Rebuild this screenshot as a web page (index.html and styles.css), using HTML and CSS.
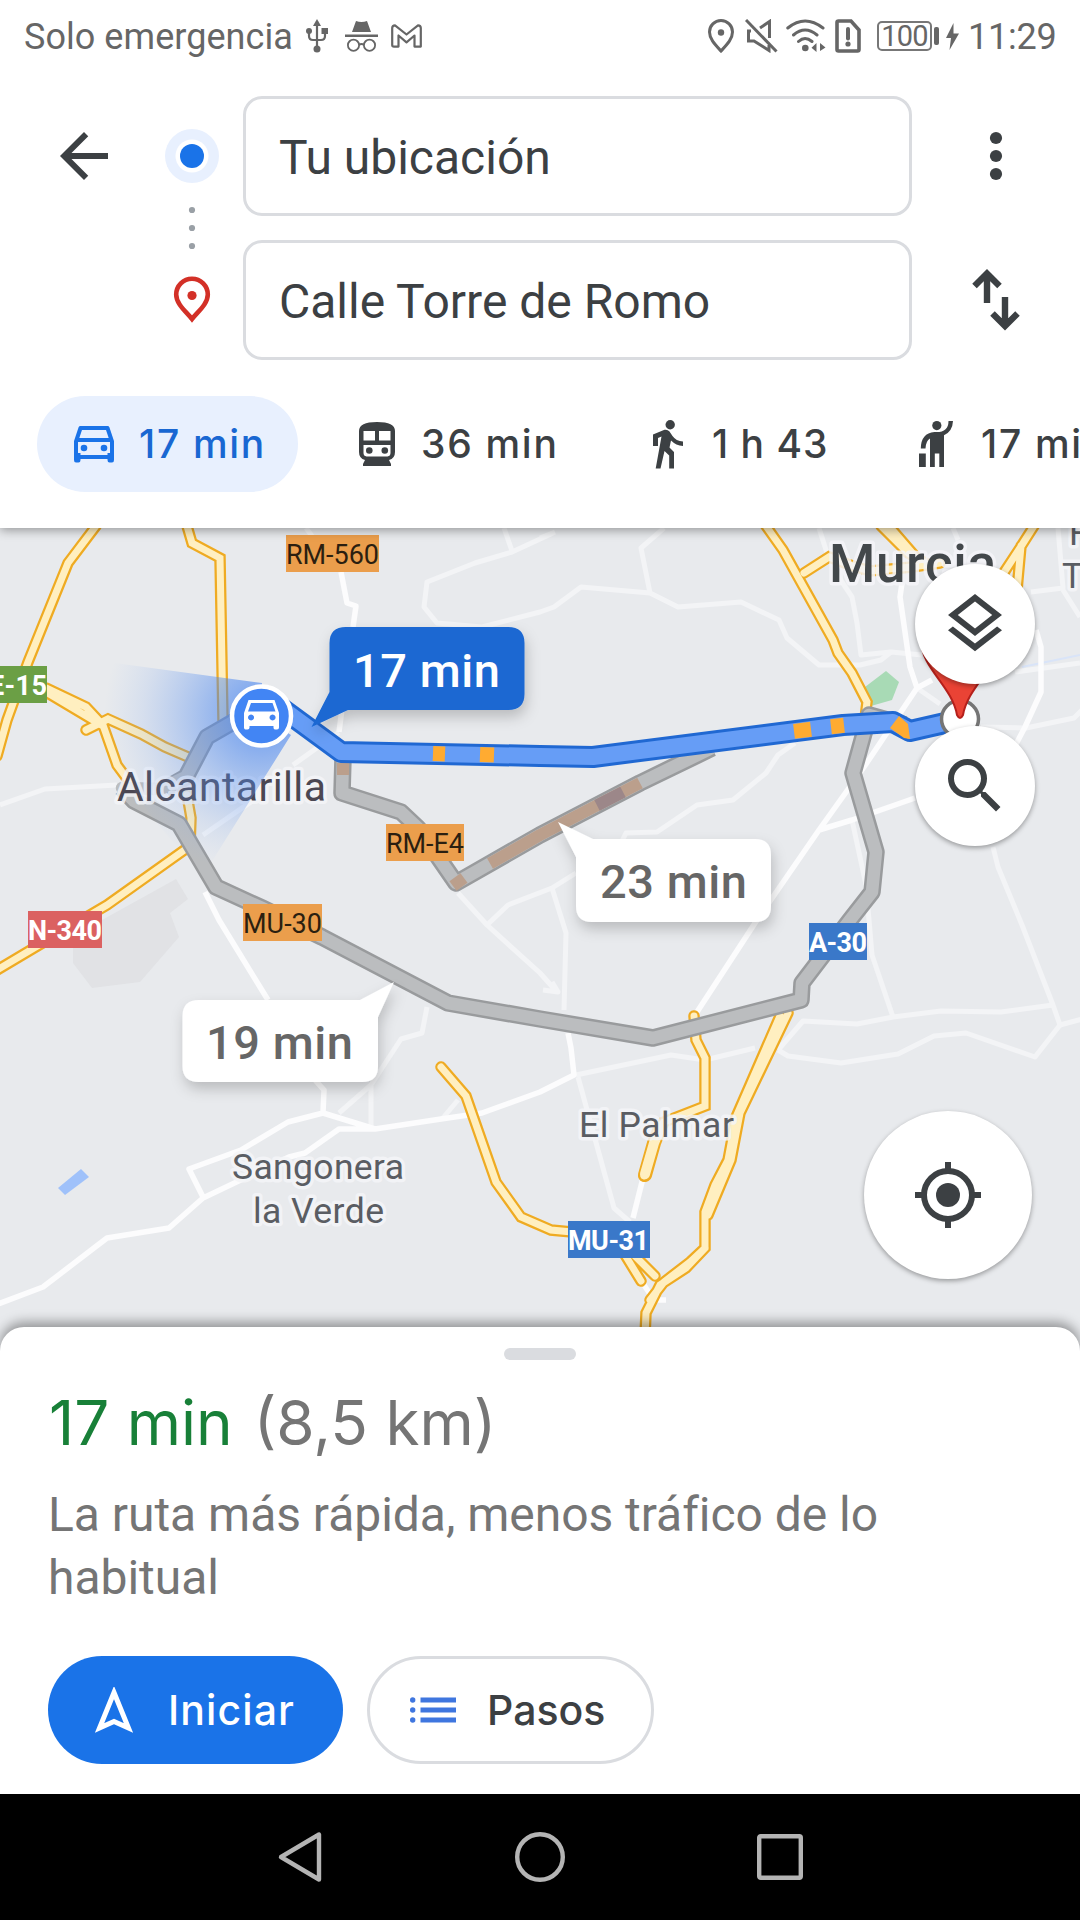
FILE: index.html
```html
<!DOCTYPE html>
<html lang="es">
<head>
<meta charset="utf-8">
<title>Tu ubicación – Calle Torre de Romo</title>
<link rel="stylesheet" href="styles.css">
</head>
<body>
<div class="screen">
  <header class="top">
    <div class="status">
      <span class="carrier">Solo emergencia</span>
      <svg class="st-usb" width="22" height="34" viewBox="0 0 22 34"><path d="M11 2v28M3 10v7q0 4 4 4h8q4 0 4-4v-6" fill="none" stroke="#666" stroke-width="2.2"/><path d="M11 0l4 7H7z" fill="#666"/><circle cx="11" cy="30" r="3.5" fill="#666"/><circle cx="3" cy="12" r="3" fill="#666"/><path d="M15.500 9H22v6h-6.500z" fill="#666"/></svg>
      <svg class="st-incog" width="33" height="31" viewBox="0 0 33 31"><path d="M7 11L11 0q5.500 2 11 0l4 11zM0 13.500h33v2.500H0z" fill="#666"/><g fill="none" stroke="#666" stroke-width="1.800"><circle cx="8.500" cy="24.200" r="5.600"/><circle cx="24.500" cy="24.200" r="5.600"/><path d="M14 24q2.500-2 5 0"/></g></svg>
      <svg class="st-mail" width="31" height="24" viewBox="0 0 31 24"><path d="M1.200 21V4Q1.200 1.300 4 1.300L15.500 10.500 27 1.300q2.800 0 2.800 2.700V22.600H23.500V11.500L15.500 18.300 7.500 11.500V22.600H3Q1.200 22.600 1.200 21z" fill="none" stroke="#666" stroke-width="2.200" stroke-linejoin="round"/></svg>
      <span class="spacer"></span>
      <svg class="st-pin" width="26" height="34" viewBox="0 0 26 34"><path d="M13 32C7 25.500 1.500 20 1.500 13a11.500 11.500 0 0 1 23 0C24.500 20 19 25.500 13 32z" fill="none" stroke="#666" stroke-width="3"/><circle cx="13" cy="13.500" r="3.200" fill="#666"/></svg>
      <svg class="st-mute" width="33" height="34" viewBox="0 0 33 34"><path d="M1 1l30.500 31.500" stroke="#666" stroke-width="3" fill="none"/><path d="M6 12H3.500v10H9l15 9.500V26M15 9l9.500-6.500V19" stroke="#666" stroke-width="3" fill="none"/></svg>
      <svg class="st-wifi" width="40" height="34" viewBox="0 0 40 34"><g fill="none" stroke="#666" stroke-width="3" stroke-linecap="round"><path d="M1.800 9Q19 -5 37 9M7.500 16Q19 6 31 16M12.500 22.500Q19 16.500 26 22.500"/></g><circle cx="19.300" cy="29" r="3.300" fill="#666"/><path d="M30.500 24v9l-5-4.300zM34 24l5.500 4.500L34 32z" fill="#666"/></svg>
      <svg class="st-sim" width="26" height="34" viewBox="0 0 26 34"><path d="M3.500 2H16l8 9v19.500q0 1.500-1.500 1.500h-19Q2 32 2 30.500v-27Q2 2 3.500 2z" fill="none" stroke="#666" stroke-width="3.600"/><path d="M13 10v9.500" stroke="#666" stroke-width="4" stroke-linecap="round"/><circle cx="13" cy="25" r="2.600" fill="#666"/></svg>
      <span class="battery">100</span><span class="nub"></span>
      <svg class="st-bolt" width="13" height="27" viewBox="0 0 13 27"><path d="M7.500 0L0 15h5l-1.500 12L13 10.500H7.500z" fill="#666"/></svg>
      <span class="clock">11:29</span>
    </div>
    <div class="route-form">
      <svg class="back" width="72" height="72" viewBox="0 0 24 24"><path d="M20 11H7.830l5.590-5.590L12 4l-8 8 8 8 1.410-1.410L7.830 13H20z" fill="#3c4043"/></svg>
      <svg class="markers" width="60" height="264" viewBox="0 0 60 264"><circle cx="30" cy="60" r="27" fill="#e8f0fe"/><circle cx="30" cy="60" r="16.500" fill="#fff"/><circle cx="30" cy="60" r="12" fill="#1a73e8"/><g fill="#9aa0a6"><circle cx="30" cy="114" r="3.100"/><circle cx="30" cy="132" r="3.100"/><circle cx="30" cy="150" r="3.100"/></g><path d="M30 223C24 215.500 14.200 208 14.200 198.500a15.800 15.800 0 0 1 31.600 0C45.800 208 36 215.500 30 223z" fill="none" stroke="#d33027" stroke-width="4.600"/><circle cx="30" cy="199.500" r="4.600" fill="#d33027"/></svg>
      <div class="fields">
        <div class="field">Tu ubicación</div>
        <div class="field">Calle Torre de Romo</div>
      </div>
      <svg class="actions" width="60" height="264" viewBox="0 0 60 264"><g fill="#3c4043"><circle cx="30" cy="42" r="6.100"/><circle cx="30" cy="60" r="6.100"/><circle cx="30" cy="78" r="6.100"/></g><path d="M21 207v-29M8.500 190L21 177.500 33.500 190M39 201v29M26.500 217.500L39 230l12.500-12.500" fill="none" stroke="#3c4043" stroke-width="6.400"/></svg>
    </div>
    <nav class="modes">
      <div class="mode mode-car"><svg width="40" height="37" viewBox="0 0 40 37"><path d="M6.500 2h27l4.500 13.500V31H2V15.500zM3 14h34" fill="none" stroke="#1a73e8" stroke-width="4" stroke-linejoin="round"/><path d="M0 27h6.500v7q0 2.500-2 2.500H2q-2 0-2-2.500zM33.500 27H40v7q0 2.500-2 2.500h-2.500q-2 0-2-2.500z" fill="#1a73e8"/><circle cx="10" cy="22" r="3.300" fill="#1a73e8"/><circle cx="30" cy="22" r="3.300" fill="#1a73e8"/></svg><span>17 min</span></div>
      <div class="mode mode-transit"><svg width="36" height="44" viewBox="0 0 36 44"><path fill-rule="evenodd" fill="#3c4043" d="M0 9Q0 0 18 0T36 9V30Q36 36.500 30 38L32 42v2H4v-2l2-4Q0 36.500 0 30zM4.500 9v9.500H16V9zM20 9v9.500H31.500V9zM4.500 23v8q0 3 3 3.500h21q3-.5 3-3.500v-8z"/><circle cx="10.300" cy="28.500" r="3.300" fill="#3c4043"/><circle cx="25.800" cy="28.500" r="3.300" fill="#3c4043"/></svg><span>36 min</span></div>
      <div class="mode mode-walk"><svg width="30" height="49" viewBox="0 0 30 49"><circle cx="17.200" cy="4.700" r="4.700" fill="#3c4043"/><path fill="#3c4043" d="M0 14.500L11.500 9.800q3-.6 5 1.700L19.500 16q3.500 5 10.500 5.500V26q-7-.5-12-5.500L16.500 27.500 21 32V48.500H16.200V35.500L11.500 31 7.500 48.500H2.700L8.500 16.500 5 18V26H0z"/></svg><span>1 h 43</span></div>
      <div class="mode mode-hail"><svg width="34" height="46" viewBox="0 0 34 46"><circle cx="17.800" cy="4.600" r="4.600" fill="#3c4043"/><path fill="#3c4043" d="M29.500 0H34Q33.500 10.500 25 14.200V46h-4.700V32.500h-4.500V46H11V17.500Q6.800 20 6.500 27.500H1.800Q2 12 15.500 11 29.500 12 29.500 0zM0 32.500h6.800V46H0z"/></svg><span>17 min</span></div>
    </nav>
  </header>

  <main class="map">
    <svg class="canvas" width="1080" height="832" viewBox="0 528 1080 832">
      <defs>
        <radialGradient id="beam" gradientUnits="userSpaceOnUse" cx="262" cy="716" r="158"><stop offset="0" stop-color="#3b7df0" stop-opacity=".75"/><stop offset=".35" stop-color="#4a86ee" stop-opacity=".46"/><stop offset=".75" stop-color="#6d9df0" stop-opacity=".15"/><stop offset="1" stop-color="#8ab4f8" stop-opacity="0"/></radialGradient>
        <filter id="soft" x="-20%" y="-30%" width="140%" height="180%"><feDropShadow dx="2" dy="7" stdDeviation="7" flood-color="#000" flood-opacity=".2"/></filter>
        <g id="yellow">
          <path d="M96 526L68 563 28 662 7 720-3 756"/>
          <path d="M187 526L192 543 220 558 223 720"/>
          <path d="M46 688L86 707 103 725 117 765 131 784M46 692L103 726"/>
          <path d="M86 730L108 719 141 734 165 747 188 757"/>
          <path d="M187 795L191 818 190 846 107 905 34 948-3 970"/>
          <path d="M766 526L783 550 833 640 838 653 852 673 867 702 865 718"/>
          <path d="M804 573L829 557 850 565 870 571 912 567 940 563"/>
          <path d="M881 526L908 553 930 566M889 526L915 556"/>
          <path d="M1034 526L1020 548 1001 577M1021 546L1017 590"/>
          <path d="M441 1067L466 1096 496 1182 521 1217 551 1230 572 1232"/>
          <path d="M694 1016L696 1040 705 1058 705 1106 664 1122 654 1143 644 1176"/>
          <path d="M780 1016L736 1117 728 1160 715 1185 705 1212 705 1248 686 1268 660 1285 646 1313 644 1360M788 1013L740 1113 731 1160 708 1215M705 1248L690 1262 664 1282 650 1300"/>
          <path d="M622 1250L641 1281M633 1254L655 1276"/>
        </g>
      </defs>
      <path d="M0 528H1080V1360H0z" fill="#e8eaed"/>
      <path d="M176 879L188 899 170 913 179 937 140 982 92 988 73 963 73 935 102 920z" fill="#e1e2e5"/>
      <path d="M58 1188L81 1169 89 1177 65 1195z" fill="#9fc1fa"/>
      <path d="M865 687L886 671 899 682 892 700 871 706z" fill="#a8dab5"/>
      <path d="M1022 667L1080 655" stroke="#d9e4f8" stroke-width="2"/>

      <g class="minor">
        <path d="M306 528L312 536M504 528L512 551M553 533L512 552 475 563 427 582 424 607 437 623 482 627 540 612 554 607 581 587 650 593 678 607 741 602 779 620 787 638 819 665 860 665 881 660 891 652M650 593L641 548 664 528M540 538L555 532"/>
        <path d="M922 655L891 652 861 655 857 623 852 597 836 573 826 550 819 528"/>
        <path d="M981 727L1026 728 1050 723 1074 718 1082 710M1015 672L1080 663M1031 592L1063 588 1058 528M1063 590L1080 617M953 528L958 540"/>
        <path d="M993 847L998 867 1022 925 1053 1005 1060 1025 1082 1019"/>
        <path d="M795 743L778 755 766 773 733 800 697 805 657 832 626 833 620 845"/>
        <path d="M576 873L552 888 508 905 487 925 458 893M487 925L540 973 557 992M552 888L566 933 564 1010M543 990L558 992 552 982"/>
        <path d="M852 820L866 885 872 955 893 1017M917 688L940 704"/>
        <path d="M576 1075L671 1055 705 1060 755 1048M778 1050L788 1056 841 1063 898 1054 934 1036 966 1033 1035 1057 1060 1025M778 1050L803 1021 857 1024 893 1017 941 1011 1001 1012 1053 1005"/>
        <path d="M578 1077L614 1208 630 1222M0 805L45 789 117 785M258 797L203 835M339 732L293 765"/>
        <path d="M339 1113L371 1085 384 1065 401 1039 422 1033 427 1007M371 1085V1127M442 1119L458 1100"/>
      </g>
      <g class="major">
        <path d="M341 572L347 603 356 606 353 627M342 709L339 732"/>
        <path d="M902 583L900 597 910 667 917 688 932 680M917 688L864 767 819 830 757 920 697 1012M819 830L852 820 915 798M1036 630L1041 647 1041 692 1025 727 1005 765"/>
        <path d="M568 1033L571 1048 574 1075 540 1092 482 1113 441 1119 375 1129 339 1129 305 1153 289 1157 203 1198 169 1228 107 1238 43 1287-2 1304M203 1197L189 1169 241 1150 288 1122 323 1113 375 1129M323 1113L324 1090 315 1080M205 892L219 920 268 1000"/>
        <path d="M643 1178L633 1218M642 1282L654 1300 666 1300"/>
      </g>

      <g class="road-case"><use href="#yellow"/><path d="M660 1128L654 1143 645 1175" stroke-width="14"/></g>
      <g class="road-fill"><use href="#yellow"/><path d="M661 1126L654 1143 645 1174" stroke-width="10"/></g>

      <g class="route alt">
        <path class="case" d="M343 758L342 793 401 812 418 828 456 883 540 835 640 783 712 748"/>
        <path class="fill" d="M343 758L342 793 401 812 418 828 456 883 540 835 640 783 712 748"/>
        <path d="M343 763V775M453 886L464 878M490 863.500L540 835 640 783" stroke="#bb9f8c" stroke-width="12"/>
        <path d="M597 805.300L623 792" stroke="#9c8789" stroke-width="12"/>
        <path class="case" d="M240 718L207 737 186 777 165 789M122 788L134 801 179 824 216 887 262 908 322 937 448 1003 540 1019 653 1038 801 1000 802 983 850 920 872 892 876 852 853 773 869 715 905 725"/>
        <path class="fill" d="M240 718L207 737 186 777 160 789 122 788 134 801 179 824 216 887 262 908 322 937 448 1003 540 1019 653 1038 801 1000 802 983 850 920 872 892 876 852 853 773 869 715 905 725"/>
      </g>
      <g class="route best">
        <path class="case" d="M262 694L341 752 540 756 593 757 843 725 893 722 910 731 945 723"/>
        <path class="fill" d="M262 694L341 752 540 756 593 757 843 725 893 722 910 731 945 723"/>
        <path d="M433 753.500L445 754M480 754.500L494 755M794 731.400L811 729.300M831 726.700L844 725.200" stroke="#ffab31" stroke-width="15"/>
        <path d="M890 728L899 716 908 724 910 739 904 738z" fill="#ffab31"/>
      </g>

      <circle cx="960" cy="719" r="18.500" fill="#fff" stroke="#757575" stroke-width="3.500"/>
      <path d="M957 715C952 686 921 668 921 640a39 39 0 0 1 78 0C999 668 968 686 963 715Q960 721 957 715z" fill="#ea4335" stroke="#b5201b" stroke-width="2"/>

      <g class="place">
        <text x="117" y="801" font-size="41" textLength="209" fill="#4b4752">Alcantarilla</text>
        <text x="829" y="582" font-size="53" textLength="167" font-weight="500" fill="#43484b">Murcia</text>
        <text x="579" y="1137" font-size="35.500" textLength="155">El Palmar</text>
        <text x="232" y="1179" font-size="35.500" textLength="172">Sangonera</text>
        <text x="253" y="1223" font-size="35.500" textLength="131">la Verde</text>
        <text x="1069" y="545" font-size="35">F</text>
        <text x="1062" y="588" font-size="35">T</text>
      </g>

      <g class="shield">
        <path d="M286 535h93v37h-93zM386 824h78v37h-78zM243 904h79v37h-79z" fill="#eb9e4c"/>
        <path d="M0 666h47v37H0z" fill="#6b9f45"/><path d="M28 911h74v37H28z" fill="#db6161"/>
        <path d="M809 923h58v37h-58zM568 1221h82v37h-82z" fill="#3a78c9"/>
        <text x="286" y="564" textLength="93">RM-560</text>
        <text x="386" y="853" textLength="78">RM-E4</text>
        <text x="243" y="933" textLength="79">MU-30</text>
        <g fill="#fff" font-weight="700"><text x="-11" y="695" textLength="58">E-15</text><text x="28" y="940" textLength="74">N-340</text><text x="809" y="952" textLength="58">A-30</text><text x="568" y="1250" textLength="81">MU-31</text></g>
      </g>

      <path d="M262 683L100 661Q85 760 204 874L291 735 262 716z" fill="url(#beam)"/>
      <g filter="url(#soft)">
        <path d="M346 627H508Q524.500 627 524.500 643V694Q524.500 710 508 710H348L311.500 727 329.500 692V643Q329.500 627 346 627z" fill="#1a67d2"/>
        <path d="M593 839H755Q771 839 771 855V906Q771 922 755 922H592Q576 922 576 906V857L558 822z" fill="#fff"/>
        <path d="M199 1000H360L394 982 378 1017V1066Q378 1082 362 1082H199Q182.500 1082 182.500 1066V1016Q182.500 1000 199 1000z" fill="#fff"/>
      </g>
      <g class="eta">
        <text x="353" y="687" textLength="147" fill="#fff">17 min</text>
        <text x="600" y="898" textLength="147">23 min</text>
        <text x="206" y="1059" textLength="147">19 min</text>
      </g>
      <circle cx="261.500" cy="716" r="29.500" fill="#4285f4" stroke="#fff" stroke-width="4.500"/>
      <path fill="#fff" fill-rule="evenodd" d="M248.500 700h26l4.500 13v14.500q0 2-2 2h-2q-1.500 0-1.500-2V726h-24v1.500q0 2-2 2h-2q-1.500 0-1.500-2V713zM251 703l-3 8.500h27.500l-3-8.500zM251 714.500a3 3 0 1 0 .1 0zM272.500 714.500a3 3 0 1 0 .1 0z"/>
    </svg>
    <button class="fab fab-layers" aria-label="Capas"><svg width="72" height="72" viewBox="0 0 24 24"><path fill="#3c4043" d="M11.990 18.540l-7.370-5.730L3 14.070l9 7 9-7-1.630-1.270zM12 16l7.360-5.730L21 9l-9-7-9 7 1.630 1.270zm0-11.470L17.740 9 12 13.470 6.260 9z"/></svg></button>
    <button class="fab fab-search" aria-label="Buscar"><svg width="72" height="72" viewBox="0 0 24 24"><path fill="#3c4043" d="M15.500 14h-.79l-.28-.27A6.471 6.471 0 0 0 16 9.500 6.500 6.500 0 1 0 9.500 16c1.610 0 3.090-.59 4.230-1.570l.27.28v.79l5 4.990L20.490 19l-4.990-5zm-6 0C7.010 14 5 11.990 5 9.500S7.010 5 9.500 5 14 7.010 14 9.500 11.990 14 9.500 14z"/></svg></button>
    <button class="fab fab-locate" aria-label="Mi ubicación"><svg width="66" height="66" viewBox="0 0 66 66"><circle cx="33" cy="33" r="24" fill="none" stroke="#3c4043" stroke-width="6"/><circle cx="33" cy="33" r="12" fill="#3c4043"/><path d="M33 0v9M33 57v9M0 33h9M57 33h9" stroke="#3c4043" stroke-width="6"/></svg></button>
  </main>

  <section class="sheet">
    <div class="handle"></div>
    <h1 class="summary"><span class="time">17 min</span><span class="dist">(8,5 km)</span></h1>
    <p class="note">La ruta más rápida, menos tráfico de lo habitual</p>
    <div class="buttons">
      <button class="btn start"><svg width="38" height="47" viewBox="0 0 38 47"><path d="M19 5.500L33.500 41 19 34.500 4.500 41z" fill="none" stroke="#fff" stroke-width="5"/></svg><span>Iniciar</span></button>
      <button class="btn steps"><svg width="46" height="26" viewBox="0 0 46 26"><path d="M10.500 3H46M10.500 13H46M10.500 23H46" stroke="#3f76df" stroke-width="5"/><g fill="#3f76df"><circle cx="2.700" cy="3" r="2.700"/><circle cx="2.700" cy="13" r="2.700"/><circle cx="2.700" cy="23" r="2.700"/></g></svg><span>Pasos</span></button>
    </div>
  </section>

  <footer class="sysnav">
    <svg width="50" height="54" viewBox="0 0 50 54"><path d="M44 4.500V49.500L6 27z" fill="none" stroke="#b4b4b4" stroke-width="4.400" stroke-linejoin="round"/></svg>
    <svg width="50" height="54" viewBox="0 0 50 54"><circle cx="25" cy="27" r="22.800" fill="none" stroke="#b4b4b4" stroke-width="4.400"/></svg>
    <svg width="50" height="54" viewBox="0 0 50 54"><rect x="4.200" y="6.200" width="41.600" height="41.600" rx="1.500" fill="none" stroke="#b4b4b4" stroke-width="4.400"/></svg>
  </footer>
</div>
</body>
</html>
```
FILE: styles.css
```css
* { box-sizing: border-box; }
body { margin: 0; background: #fff; font-family: Roboto, "Noto Sans", sans-serif; }
button { font: inherit; border: 0; padding: 0; margin: 0; }
svg { display: block; flex: none; }
.screen { width: 1080px; height: 1920px; display: flex; flex-direction: column; overflow: hidden; }

.top { position: relative; z-index: 2; height: 528px; flex: none; background: #fff; box-shadow: 0 2px 10px rgba(0, 0, 0, .38); overflow: visible; }
.status { height: 72px; padding: 0 24px; display: flex; align-items: center; color: #666; font-size: 36px; line-height: 42px; white-space: nowrap; }
.carrier { width: 282px; letter-spacing: .05px; padding-top: 2px; }
.st-incog { margin-left: 17px; }
.st-mail { margin-left: 13px; }
.spacer { flex: 1; }
.st-mute { margin-left: 11px; }
.st-wifi { margin-left: 8px; }
.st-sim { margin-left: 9px; }
.battery { width: 55px; height: 30px; margin-left: 16px; border: 2px solid #777; border-radius: 5px; font-size: 29px; line-height: 27px; text-align: center; letter-spacing: -.8px; }
.nub { width: 5px; height: 18px; margin-left: 2px; border-radius: 2px; background: #666; }
.st-bolt { margin-left: 7px; }
.clock { width: 88px; margin-left: 9px; padding-top: 2px; letter-spacing: -.2px; }

.route-form { display: flex; padding: 24px 54px 0 48px; }
.back { margin-top: 24px; }
.markers { margin-left: 42px; }
.fields { width: 669px; margin-left: 21px; display: flex; flex-direction: column; gap: 24px; }
.field { height: 120px; border: 3px solid #dadce0; border-radius: 19px; padding: 1px 0 0 33px; font-size: 48px; line-height: 116px; color: #3c4043; white-space: nowrap; }
.actions { margin-left: 54px; }

.modes { margin-top: 36px; padding-left: 37px; display: flex; overflow: hidden; }
.mode { height: 96px; flex: none; display: flex; align-items: center; border-radius: 48px; font: 500 39px/48px Inter, Roboto, sans-serif; letter-spacing: 1.7px; color: #3c4043; white-space: nowrap; }
.mode-car { width: 261px; padding-left: 37px; background: #e8f0fe; color: #1967d2; gap: 25px; }
.mode-transit { width: 294px; padding-left: 61px; gap: 26px; }
.mode-walk { width: 269px; padding-left: 61px; gap: 29px; letter-spacing: 1px; }
.mode-hail { width: 300px; padding-left: 58px; gap: 28px; }

.map { position: relative; height: 799px; flex: none; }
.canvas { font-family: Roboto, sans-serif; }
.minor path, .major path { fill: none; stroke-linejoin: round; }
.minor path { stroke: #f3f4f6; stroke-width: 5px; }
.major path { stroke: #fcfcfd; stroke-width: 5.5px; }
.road-case, .road-fill { fill: none; }
.road-case { stroke: #efab22; stroke-width: 11.5px; stroke-linecap: round; }
.road-fill { stroke: #ffefc0; stroke-width: 7px; stroke-linecap: round; }
.route path { stroke-linejoin: round; }
.route .case, .route .fill { fill: none; }
.alt .case { stroke: #999b9d; stroke-width: 17.5px; }
.alt .fill { stroke: #bbbdbf; stroke-width: 12.5px; }
.best .case { stroke: #2068d2; stroke-width: 22px; }
.best .fill { stroke: #669df6; stroke-width: 16px; }
.place { fill: #5a5d63; stroke: #f4f5f8; stroke-width: 7px; stroke-opacity: .85; stroke-linejoin: round; paint-order: stroke; }
.shield { font-size: 27px; fill: #2b1f10; }
.eta { font-size: 47px; font-weight: 500; fill: #666; }

.fab { position: absolute; display: flex; align-items: center; justify-content: center; border-radius: 50%; background: #fff; box-shadow: 0 2px 5px rgba(0, 0, 0, .35); }
.fab-layers, .fab-search { left: 915px; width: 120px; height: 120px; }
.fab-layers { top: 36px; }
.fab-search { top: 198px; }
.fab-locate { left: 864px; top: 583px; width: 168px; height: 168px; }

.sheet { position: relative; z-index: 1; height: 467px; flex: none; padding: 21px 48px 0; border-radius: 24px 24px 0 0; background: #fff; box-shadow: 0 -5px 12px rgba(0, 0, 0, .36); }
.handle { width: 72px; height: 12px; margin: 0 auto; border-radius: 6px; background: #dadce0; }
.summary { display: flex; gap: 21px; margin: 25px 0 0 1px; font: 400 62px/76px Inter, Roboto, sans-serif; white-space: nowrap; }
.time { color: #188038; }
.dist { color: #757575; }
.note { margin: 22px 0 0; width: 860px; font-size: 48px; line-height: 63px; letter-spacing: -.03px; color: #757575; }
.buttons { display: flex; gap: 24px; margin-top: 47px; }
.btn { height: 108px; display: flex; align-items: center; border-radius: 54px; font: 500 41px/50px Inter, Roboto, sans-serif; }
.start { width: 295px; padding-left: 47px; gap: 35px; letter-spacing: 1.1px; background: #1a73e8; color: #fff; }
.steps { width: 287px; padding-left: 40px; gap: 31px; border: 3px solid #dadce0; background: #fff; color: #3c4043; }

.sysnav { height: 126px; flex: none; display: flex; justify-content: center; align-items: center; gap: 190px; background: #000; }
```
